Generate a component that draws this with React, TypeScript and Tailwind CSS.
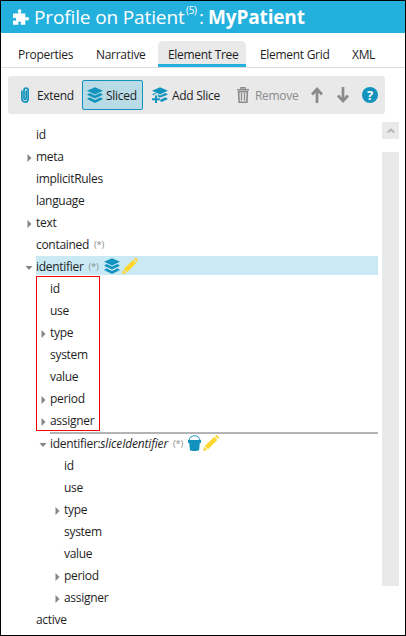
import React from "react";

type IconProps = { className?: string };

const Puzzle = () => (
  <svg className="h-4 w-4 shrink-0" viewBox="0 0 16 16" fill="#fff">
    <path d="M0 4.500h4.800c.9 0 .9-.6.500-1.200C4.300 1.800 5 .3 6.600.3s2.300 1.500 1.300 3c-.4.6-.4 1.200.5 1.200h3.900v3.200c0 .8.5.9 1.100.5 1.300-.8 2.600 0 2.600 1.500s-1.300 2.300-2.600 1.500c-.6-.4-1.100-.3-1.100.5V15.700H8.400c-.8 0-.9-.5-.6-1.100.7-1.200 0-2.200-1.200-2.200s-1.900 1-1.200 2.200c.3.6.2 1.100-.6 1.100H0v-3.500c0-.8.500-.9 1.100-.6 1.100.6 2.100 0 2.100-1.300s-1-1.900-2.100-1.300C.500 9.300 0 9.200 0 8.400z" />
  </svg>
);

const Clip = () => (
  <svg className="ml-[13px] h-4 w-2 shrink-0" viewBox="0 0 8 16" fill="none" stroke="#1293bd" strokeWidth="1.7" strokeLinecap="round">
    <path d="M5.200 4v7.200c0 1.600-2.200 1.600-2.200 0V3.200C3 .3 7.200.3 7.200 3.200v8.300c0 4.800-6.300 4.800-6.300 0V4" />
  </svg>
);

const Layers = ({ className = "" }: IconProps) => (
  <svg className={`h-4 w-4 shrink-0 ${className}`} viewBox="0 0 16 16" fill="#1293bd">
    <path d="M8 .2 16 3.700 8 7.400 0 3.700z" />
    <path d="m2.500 6-2.500 1.700 8 3.900 8-3.900L13.500 6 8 8.600z" />
    <path d="m2.500 10.200-2.500 1.700 8 4 8-4-2.500-1.700L8 12.900z" />
  </svg>
);

const AddLayers = () => (
  <svg className="ml-[9px] h-4 w-4 shrink-0" viewBox="0 0 16 16" fill="#1293bd">
    <path d="M8 .2 16 3.700 8 7.400 0 3.700z" />
    <path d="m2.500 6-2.500 1.500 2 1V7.200h3.800v2.200l2.200 1.300L16 7.500 13.500 6 8 8.600z" />
    <path d="M7.500 13.600h1l.5 1.600L16 12l-2.500-1.700L8.600 12.600z" />
    <path d="M3 8.500h2v2.700h2.800v2H5V16H3v-2.800H0v-2h3z" />
  </svg>
);

const Trash = () => (
  <svg className="ml-4 h-4 w-3 shrink-0" viewBox="0 0 12 16" fill="none" stroke="#8b8b8d">
    <path d="M0 2.700h12M4 2.300V.7h4v1.600" strokeWidth="1.500" />
    <path d="M1.600 4.700h8.800l-.5 10.500H2.100z" strokeWidth="1.600" />
    <path d="M4.500 6v7.500M7.500 6v7.500" strokeWidth="1.300" />
  </svg>
);

const Arrow = ({ className = "" }: IconProps) => (
  <svg className={`h-4 w-3 shrink-0 ${className}`} viewBox="0 0 12 16" fill="none" stroke="#8b8b8d" strokeWidth="2.700">
    <path d="M6 16V2M1 7.500 6 2l5 5.500" />
  </svg>
);

const Pencil = ({ className = "" }: IconProps) => (
  <svg className={`h-4 w-4 shrink-0 ${className}`} viewBox="0 0 16 16" fill="#ffd62e">
    <path d="m12 .9 1-.8c.9-.4 3.200 1.700 2.900 2.700l-.9 1.300zM11.200 1.700l3.200 3.200-9.300 9.300-3.300-3.300zM1.200 11.700l3.200 3.200-4.300 1z" />
  </svg>
);

const Bucket = () => (
  <svg className="ml-[5px] h-4 w-[13px] shrink-0" viewBox="0 0 13 16">
    <path d="M1 6c0-7 11-7 11 0" fill="none" stroke="#1293bd" />
    <path d="M0 5h13v3H0zM1.200 8h10.600l-.7 7.200c-1 .9-8.200.9-9.200 0z" fill="#1293bd" />
  </svg>
);

const Toggle = ({ open }: { open?: boolean }) => (
  <svg className="mt-[3px] mr-[3px] h-2 w-2 shrink-0" viewBox="0 0 8 8" fill="#858587">
    {open ? <path d="M.500 2h7L4 6z" /> : <path d="M2.500 0 6.500 4l-4 4z" />}
  </svg>
);

type RowProps = { label: string; arrow?: boolean; children?: React.ReactNode };

const Row = ({ label, arrow, children }: RowProps) => (
  <div className="flex h-[22px] items-center">
    {arrow ? <Toggle /> : <span className="w-[11px] shrink-0" />}
    <span className="pt-[2px]">{label}</span>
    {children}
  </div>
);

const Many = () => <span className="mt-[2px] ml-[5px] text-[9.500px] text-[#8f8f8f]">(*)</span>;

const ElementChildren = () => (
  <>
    <Row label="id" />
    <Row label="use" />
    <Row label="type" arrow />
    <Row label="system" />
    <Row label="value" />
    <Row label="period" arrow />
    <Row label="assigner" arrow />
  </>
);

export default function App() {
  return (
    <div className="flex h-[636px] w-[406px] flex-col overflow-hidden border border-black bg-white font-['Open_Sans','Noto_Sans',sans-serif] text-[12px] leading-4 tracking-[-0.300px] whitespace-nowrap text-[#1e1e1e]">
      <header className="flex h-8 shrink-0 items-center bg-[#24b0dd] pl-[12px] text-[19px] text-white">
        <Puzzle />
        <span className="ml-[5px] w-[152px] tracking-[-0.130px]">Profile on Patient</span>
        <span className="mb-[14px] w-[13px] text-[10px]">(5)</span>
        <span className="w-[9px]">:</span>
        <span className="font-bold tracking-[-0.150px]">MyPatient</span>
      </header>

      <nav className="flex h-[35px] shrink-0 items-end border-b border-[#dcdcdc] bg-white">
        <span className="ml-[17px] flex h-[26px] w-[78px] items-center pt-[2px]">Properties</span>
        <span className="flex h-[26px] w-[62px] items-center pt-[2px]">Narrative</span>
        <span className="flex h-[26px] w-[88px] items-center rounded-t-[5px] border-b-[3px] border-[#24b0dd] bg-[#e9e9e9] pt-[5px] pl-[10px]">Element Tree</span>
        <span className="ml-[14px] flex h-[26px] w-[92px] items-center pt-[2px]">Element Grid</span>
        <span className="flex h-[26px] items-center pt-[2px]">XML</span>
      </nav>

      <div className="mt-2 ml-[7px] flex h-[38px] w-[377px] shrink-0 items-center rounded-[3px] bg-[#e9e9e9]">
        <Clip />
        <span className="ml-2 w-[45px] pt-[2px]">Extend</span>
        <div className="flex h-[30px] w-[61px] items-center rounded-[2px] border border-[#1293bd] bg-[#b9dbe6] pl-1">
          <Layers />
          <span className="ml-[3px] pt-[2px]">Sliced</span>
        </div>
        <AddLayers />
        <span className="ml-1 w-[49px] pt-[2px]">Add Slice</span>
        <Trash />
        <span className="ml-[6px] w-[43px] pt-[2px] text-[#8b8b8d]">Remove</span>
        <Arrow className="ml-[13px]" />
        <Arrow className="ml-[14px] rotate-180" />
        <span className="ml-[13px] flex size-4 items-center justify-center rounded-full bg-[#1293bd] text-[13px] font-bold text-white">?</span>
      </div>

      <div className="mt-2 flex min-h-0 grow">
        <main className="w-[377px] shrink-0 pt-px pl-6">
          <Row label="id" />
          <Row label="meta" arrow />
          <Row label="implicitRules" />
          <Row label="language" />
          <Row label="text" arrow />
          <Row label="contained"><Many /></Row>
          <div className="flex h-[22px] items-center">
            <Toggle open />
            <div className="mb-px flex h-[19px] grow items-center bg-[#c9eaf5]">
              <span className="pt-[2px]">identifier</span>
              <Many />
              <Layers className="ml-[6px]" />
              <Pencil className="ml-[2px]" />
            </div>
          </div>
          <div className="relative pl-[14px]">
            <ElementChildren />
            <div className="absolute -top-px left-[11px] h-[155px] w-16 border border-[#f00505]" />
          </div>
          <div className="pl-[14px] pt-px">
            <div className="ml-[11px] h-[2px] bg-[#b4b4b6]" />
            <div className="-mt-[2px] flex h-[22px] items-center">
              <Toggle open />
              <span className="pt-[2px]">identifier:</span>
              <i className="pt-[2px] tracking-[-0.170px]">sliceIdentifier</i>
              <Many />
              <Bucket />
              <Pencil className="ml-[2px]" />
            </div>
            <div className="pl-[14px]">
              <ElementChildren />
            </div>
          </div>
          <Row label="active" />
        </main>
        <aside className="ml-1 w-[17px]">
          <div className="flex h-[17px] items-center justify-center bg-[#e9e9e9]">
            <svg className="h-2 w-2" viewBox="0 0 8 8" fill="none" stroke="#b4b4b4" strokeWidth="1.800">
              <path d="m.7 5.500 3.300-3 3.300 3" />
            </svg>
          </div>
          <div className="mt-[13px] h-[434px] bg-[#e9e9e9]" />
        </aside>
      </div>
    </div>
  );
}
